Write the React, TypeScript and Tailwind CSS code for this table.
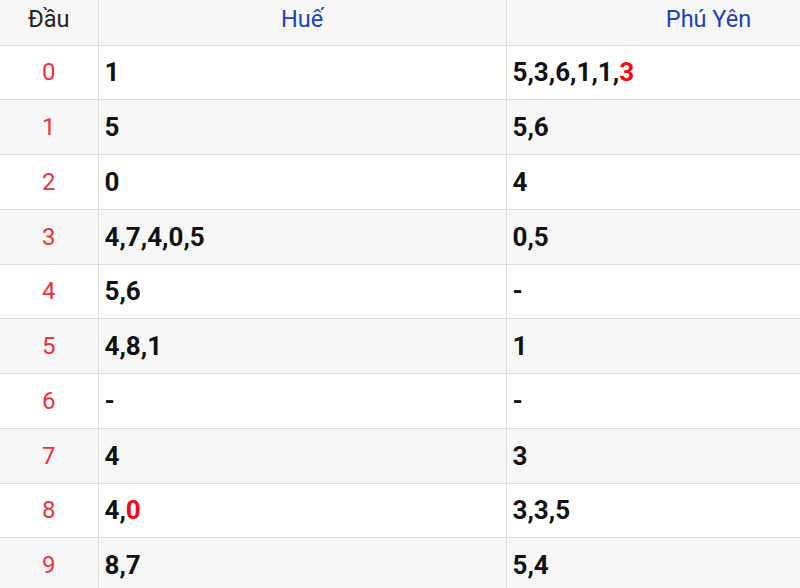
const rows: { head: string; hue: (string | [string])[]; phuYen: (string | [string])[] }[] = [
  { head: "0", hue: ["1"], phuYen: ["5", "3", "6", "1", "1", ["3"]] },
  { head: "1", hue: ["5"], phuYen: ["5", "6"] },
  { head: "2", hue: ["0"], phuYen: ["4"] },
  { head: "3", hue: ["4", "7", "4", "0", "5"], phuYen: ["0", "5"] },
  { head: "4", hue: ["5", "6"], phuYen: ["-"] },
  { head: "5", hue: ["4", "8", "1"], phuYen: ["1"] },
  { head: "6", hue: ["-"], phuYen: ["-"] },
  { head: "7", hue: ["4"], phuYen: ["3"] },
  { head: "8", hue: ["4", ["0"]], phuYen: ["3", "3", "5"] },
  { head: "9", hue: ["8", "7"], phuYen: ["5", "4"] },
]

function Numbers({ items }: { items: (string | [string])[] }) {
  return (
    <>
      {items.map((it, i) => (
        <span key={i}>
          {i > 0 && ","}
          {Array.isArray(it) ? <span className="text-[#f50a14]">{it[0]}</span> : it}
        </span>
      ))}
    </>
  )
}

export default function App() {
  return (
    <div className="w-[800px] h-[588px] overflow-hidden bg-white font-['Roboto',sans-serif]">
      <table className="w-[911px] border-collapse table-fixed">
        <colgroup>
          <col className="w-[98px]" />
          <col className="w-[408px]" />
          <col className="w-[405px]" />
        </colgroup>
        <thead>
          <tr className="h-[45px] bg-[#f7f7f7] text-[23.5px] font-normal leading-none">
            <th className="border border-[#dedede] border-t-0 border-l-0 font-normal text-[#222] pb-[6px]">Đầu</th>
            <th className="border border-[#dedede] border-t-0 font-normal text-[#2140be] pb-[6px]">Huế</th>
            <th className="border border-[#dedede] border-t-0 font-normal text-[#2140be] pb-[6px]">Phú Yên</th>
          </tr>
        </thead>
        <tbody>
          {rows.map((r, i) => (
            <tr key={r.head} className={`h-[54.75px] leading-none ${i % 2 === 1 ? "bg-[#f7f7f7]" : "bg-white"}`}>
              <td className="border border-[#dedede] border-l-0 text-center text-[24px] text-[#f0303a]">{r.head}</td>
              <td className="border border-[#dedede] px-[6px] text-[26px] font-bold text-[#111]">
                <Numbers items={r.hue} />
              </td>
              <td className="border border-[#dedede] px-[6px] text-[26px] font-bold text-[#111]">
                <Numbers items={r.phuYen} />
              </td>
            </tr>
          ))}
        </tbody>
      </table>
    </div>
  )
}
